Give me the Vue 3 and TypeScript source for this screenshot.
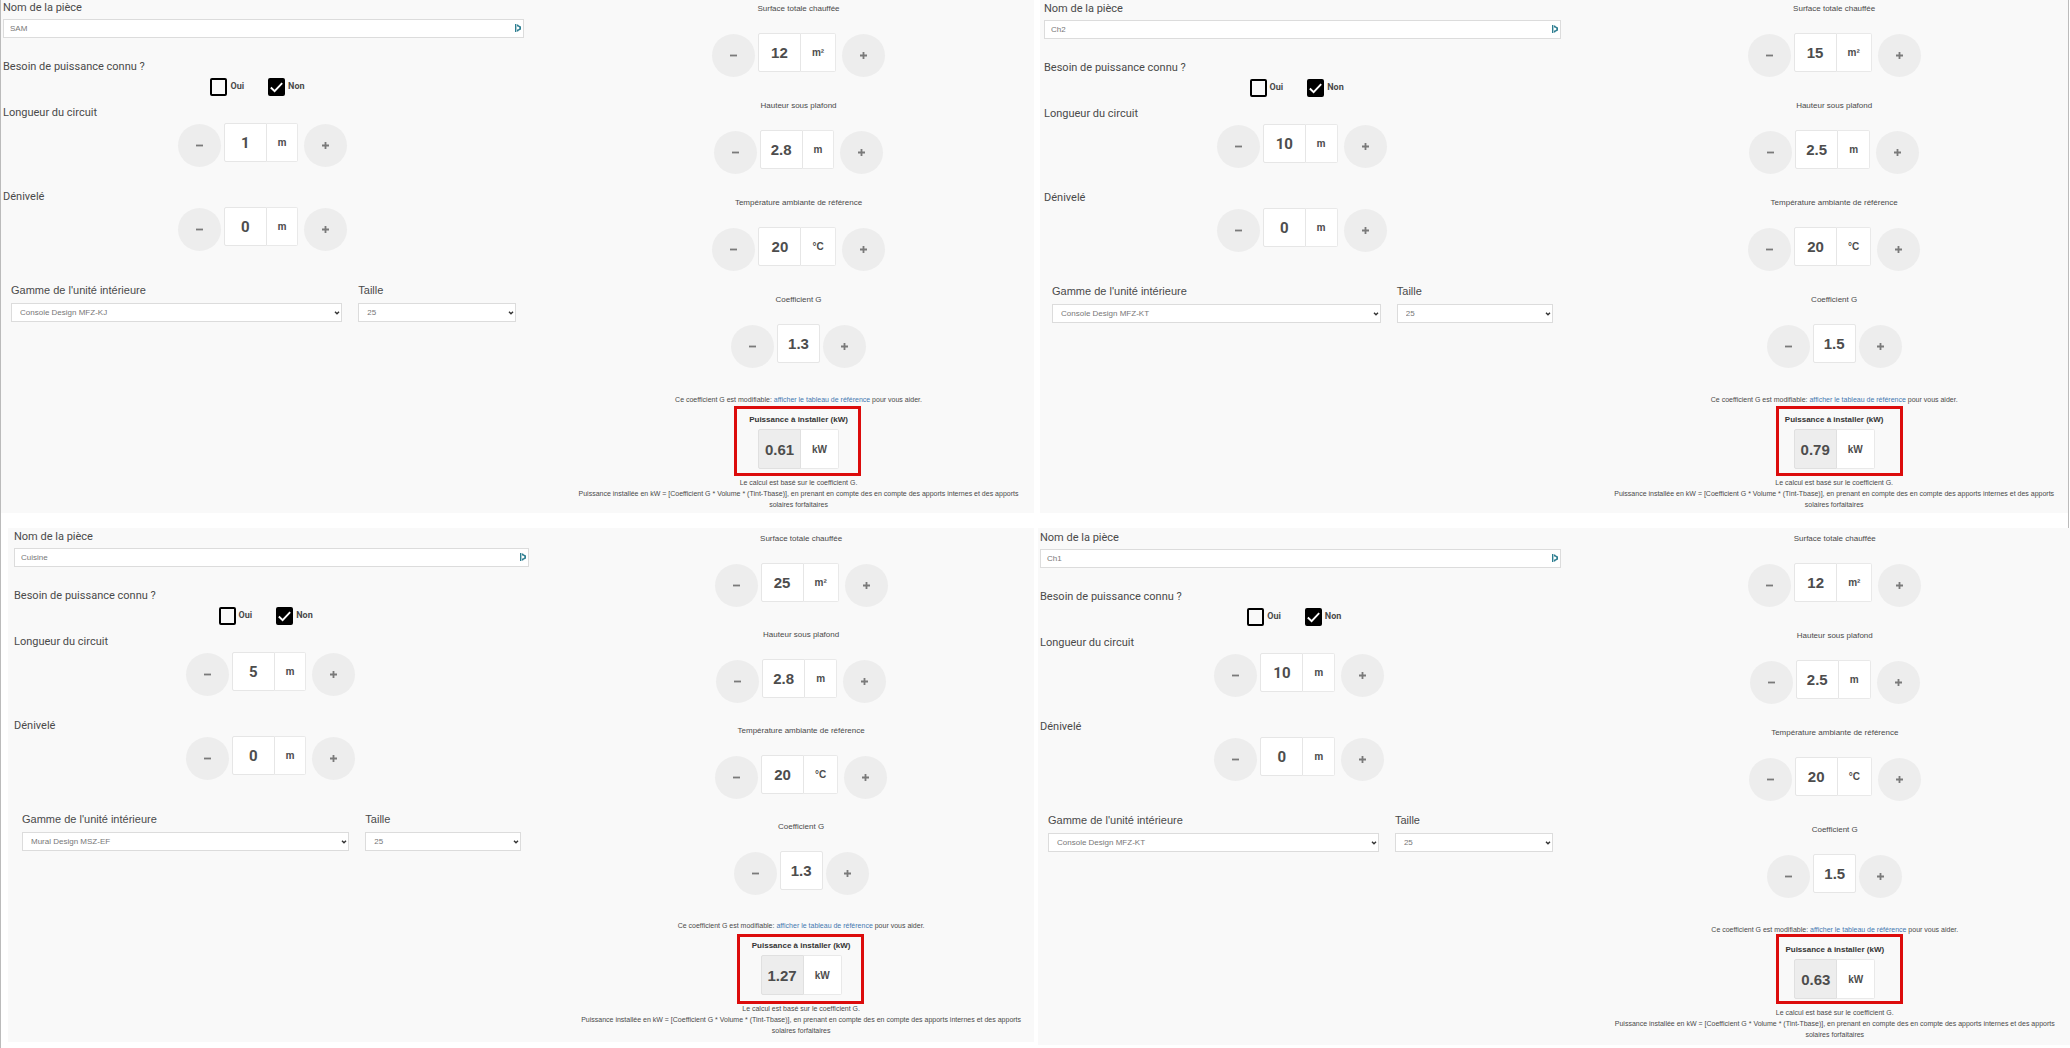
<script setup lang="ts">
import { reactive } from 'vue'

interface Stepper {
  id: string
  label: string
  value: string
  unit: string
  step: number
}

interface Room {
  id: string
  name: string
  known: boolean
  circuit: Stepper[]
  heating: Stepper[]
  range: string
  size: string
  power: string
  layout: Record<string, string>
}

const ranges = ['Console Design MFZ-KJ', 'Console Design MFZ-KT', 'Mural Design MSZ-EF']
const sizes = ['25', '35', '50']

function makeRoom(
  id: string,
  name: string,
  values: string[],
  range: string,
  power: string,
  layout: Record<string, string>,
): Room {
  const [length, surface, height, coefficient] = values
  return {
    id,
    name,
    known: false,
    circuit: [
      { id: 'length', label: 'Longueur du circuit', value: length, unit: 'm', step: 1 },
      { id: 'drop', label: 'Dénivelé', value: '0', unit: 'm', step: 1 },
    ],
    heating: [
      { id: 'surface', label: 'Surface totale chauffée', value: surface, unit: 'm²', step: 1 },
      { id: 'height', label: 'Hauteur sous plafond', value: height, unit: 'm', step: 0.1 },
      { id: 'temp', label: 'Température ambiante de référence', value: '20', unit: '°C', step: 1 },
      { id: 'coef', label: 'Coefficient G', value: coefficient, unit: '', step: 0.1 },
    ],
    range,
    size: '25',
    power,
    layout,
  }
}

function layout(basis: number, inset: number, form: number, calc: number, pitch: number, end: number, mark: number) {
  return {
    '--basis': `${basis}px`,
    '--inset': `${inset}px`,
    '--form-top': `${form}px`,
    '--calc-top': `${calc}px`,
    '--pitch': `${pitch}px`,
    '--end': `${end}px`,
    '--mark-right': `${mark}px`,
  }
}

const rows = reactive<Room[][]>([
  [
    makeRoom('sam', 'SAM', ['1', '12', '2.8', '1.3'], ranges[0], '0.61', layout(1033, 2, 1, 4, 97, 3, 173)),
    makeRoom('ch2', 'Ch2', ['10', '15', '2.5', '1.5'], ranges[1], '0.79', layout(1028, 4, 2, 4, 97, 3, 165)),
  ],
  [
    makeRoom('cuisine', 'Cuisine', ['5', '25', '2.8', '1.3'], ranges[2], '1.27', layout(1026, 6, 2, 6, 96, 6, 170)),
    makeRoom('ch1', 'Ch1', ['10', '12', '2.5', '1.5'], ranges[1], '0.63', layout(1032, 2, 3, 6, 97, 5, 167)),
  ],
])

function change(stepper: Stepper, direction: number) {
  const digits = stepper.step < 1 ? 1 : 0
  const next = Math.max(0, Number(stepper.value) + direction * stepper.step)
  stepper.value = next.toFixed(digits)
}
</script>

<template>
  <main class="page">
    <div v-for="(row, index) in rows" :key="index" class="row" :class="index === 0 ? 'row-first' : 'row-last'">
      <section v-for="room in row" :key="room.id" class="panel" :style="room.layout">
        <form class="form" @submit.prevent>
          <label class="heading" :for="room.id + '-name'">Nom de la pièce</label>
          <div class="name-box">
            <input :id="room.id + '-name'" v-model="room.name" class="field" type="text" />
            <svg class="name-icon" viewBox="0 0 6 8" aria-hidden="true">
              <path d="M0 0h1.4v8H0z" />
              <path d="M2 0.4h1.2v2H2zM2 5.6h1.2v2H2z" />
              <path d="M3 1L6 2.4v3.2L3 7V5.4l1.4-.8V3.4L3 2.6z" />
            </svg>
          </div>

          <p class="heading need">Besoin de puissance connu ?</p>
          <div class="checks">
            <label class="check">
              <span class="tick">
                <input type="checkbox" :checked="room.known" @change="room.known = true" />
                <svg v-if="room.known" viewBox="0 0 18 18" aria-hidden="true"><path d="M3 9.5l4 4L15 5" /></svg>
              </span>
              Oui
            </label>
            <label class="check">
              <span class="tick">
                <input type="checkbox" :checked="!room.known" @change="room.known = false" />
                <svg v-if="!room.known" viewBox="0 0 18 18" aria-hidden="true"><path d="M3 9.5l4 4L15 5" /></svg>
              </span>
              Non
            </label>
          </div>

          <div v-for="item in room.circuit" :key="item.id" class="circuit">
            <label class="heading" :for="room.id + '-' + item.id">{{ item.label }}</label>
            <div class="stepper">
              <button type="button" class="round" aria-label="Diminuer" @click="change(item, -1)">
                <svg viewBox="0 0 7 7" aria-hidden="true"><path d="M0 2.6h7v1.8H0z" /></svg>
              </button>
              <div class="value" :class="{ joined: item.unit }">
                <input :id="room.id + '-' + item.id" v-model="item.value" type="text" inputmode="decimal" />
                <span class="unit">{{ item.unit }}</span>
              </div>
              <button type="button" class="round" aria-label="Augmenter" @click="change(item, 1)">
                <svg viewBox="0 0 7 7" aria-hidden="true"><path d="M0 2.6h7v1.8H0zM2.6 0h1.8v7H2.6z" /></svg>
              </button>
            </div>
          </div>

          <div class="unit-choice">
            <div class="choice">
              <label class="sub-heading" :for="room.id + '-range'">Gamme de l'unité intérieure</label>
              <div class="select-box">
                <select :id="room.id + '-range'" v-model="room.range">
                  <option v-for="range in ranges" :key="range">{{ range }}</option>
                </select>
                <svg viewBox="0 0 6 4" aria-hidden="true"><path d="M1 .8l2 2 2-2" /></svg>
              </div>
            </div>
            <div class="choice">
              <label class="sub-heading" :for="room.id + '-size'">Taille</label>
              <div class="select-box">
                <select :id="room.id + '-size'" v-model="room.size">
                  <option v-for="size in sizes" :key="size">{{ size }}</option>
                </select>
                <svg viewBox="0 0 6 4" aria-hidden="true"><path d="M1 .8l2 2 2-2" /></svg>
              </div>
            </div>
          </div>
        </form>

        <div class="calc">
          <div v-for="item in room.heating" :key="item.id" class="heating">
            <label :for="room.id + '-' + item.id">{{ item.label }}</label>
            <div class="stepper">
              <button type="button" class="round" aria-label="Diminuer" @click="change(item, -1)">
                <svg viewBox="0 0 7 7" aria-hidden="true"><path d="M0 2.6h7v1.8H0z" /></svg>
              </button>
              <div class="value" :class="{ joined: item.unit }">
                <input :id="room.id + '-' + item.id" v-model="item.value" type="text" inputmode="decimal" />
                <span v-if="item.unit" class="unit">{{ item.unit }}</span>
              </div>
              <button type="button" class="round" aria-label="Augmenter" @click="change(item, 1)">
                <svg viewBox="0 0 7 7" aria-hidden="true"><path d="M0 2.6h7v1.8H0zM2.6 0h1.8v7H2.6z" /></svg>
              </button>
            </div>
          </div>

          <p class="hint">
            Ce coefficient G est modifiable: <a href="#reference">afficher le tableau de référence</a> pour vous aider.
          </p>
          <label class="power-label" :for="room.id + '-power'">Puissance à installer (kW)</label>
          <div class="value joined power">
            <input :id="room.id + '-power'" :value="room.power" type="text" readonly />
            <span class="unit">kW</span>
          </div>
          <p class="note">
            Le calcul est basé sur le coefficient G.<br />
            Puissance installée en kW = [Coefficient G * Volume * (Tint-Tbase)], en prenant en compte des en compte des
            apports internes et des apports solaires forfaitaires
          </p>
        </div>
        <div class="mark" aria-hidden="true"></div>
      </section>
    </div>
  </main>
</template>

<style>
body {
  background: #fff;
}
</style>

<style scoped>
.page {
  box-sizing: border-box;
  min-height: 100vh;
  border-left: 1px solid #bbb;
  color: #4a4a4a;
  font-family: 'Liberation Sans', Arial, sans-serif;
  font-size: 8px;
}

.row {
  display: flex;
}

.row-first {
  gap: 6px;
  margin-right: 1px;
  padding-bottom: 15px;
  border-right: 1px solid #bbb;
}

.row-last {
  align-items: flex-start;
  gap: 4px;
  padding-left: 7px;
}

.panel {
  position: relative;
  box-sizing: border-box;
  display: grid;
  grid-template-columns: minmax(0, 10fr) minmax(0, 9fr);
  column-gap: 41px;
  flex: 1 1 var(--basis);
  min-width: 0;
  padding: 0 0 var(--end) var(--inset);
  background: #f9f9f9;
}

.form {
  padding-top: var(--form-top);
}

p {
  margin: 0;
}

.heading,
.sub-heading {
  display: block;
  font-size: 11px;
  line-height: 14px;
}

.heading {
  font-family: Roboto, 'Liberation Sans', sans-serif;
}

.name-box,
.select-box {
  position: relative;
}

.name-box {
  margin-top: 4px;
}

.field,
select {
  display: block;
  box-sizing: border-box;
  width: 100%;
  height: 19px;
  border: 1px solid #dcdcdc;
  border-radius: 0;
  background: #fff;
  color: #777;
  font: 8px 'Liberation Sans', Arial, sans-serif;
}

.field {
  padding: 0 6px;
}

select {
  appearance: none;
  padding: 0 8px;
}

.name-icon {
  position: absolute;
  top: 5px;
  right: 3px;
  width: 6px;
  height: 8px;
  fill: #2c7d90;
}

.need {
  margin-top: 22px;
}

.checks {
  display: flex;
  justify-content: center;
  gap: 24px;
  margin: 4px 12px 10px 0;
}

.check {
  display: flex;
  align-items: flex-start;
  gap: 3px;
  height: 18px;
  font: bold 9px/16px Roboto, 'Liberation Sans', sans-serif;
}

.tick {
  position: relative;
  width: 17px;
  height: 18px;
}

.tick input {
  appearance: none;
  display: block;
  box-sizing: border-box;
  width: 100%;
  height: 100%;
  margin: 0;
  border: 2px solid #000;
  border-radius: 2px;
}

.tick input:checked {
  background: #000;
}

.tick svg {
  position: absolute;
  inset: 0;
  width: 100%;
  height: 100%;
  fill: none;
  stroke: #fff;
  stroke-width: 2;
  pointer-events: none;
}

.circuit .stepper {
  margin: 3px 2px 23px 0;
}

.stepper {
  display: flex;
  justify-content: center;
  gap: 3px;
}

.round {
  display: flex;
  align-items: center;
  justify-content: center;
  width: 43px;
  height: 43px;
  margin-top: 1px;
  padding: 0;
  border: 0;
  border-radius: 50%;
  background: #ededed;
}

.round svg {
  width: 7px;
  height: 7px;
  fill: #7a7a7a;
}

.value {
  display: flex;
  height: 39px;
  color: #4d4d4d;
  font-weight: bold;
}

.value input {
  box-sizing: border-box;
  width: 43px;
  height: 100%;
  padding: 0;
  border: 1px solid #e6e6e6;
  border-radius: 2px;
  background: #fff;
  color: inherit;
  font: bold 15px 'Liberation Sans', Arial, sans-serif;
  text-align: center;
}

.joined input {
  border-radius: 2px 0 0 2px;
}

.stepper .joined {
  margin-right: 3px;
}

.unit {
  display: flex;
  align-items: center;
  padding: 0 11px;
  border: 1px solid #e9e9e9;
  border-left: 0;
  border-radius: 0 2px 2px 0;
  background: #fff;
  font-size: 10px;
}

.circuit .value input,
.circuit .unit {
  font-family: Roboto, 'Liberation Sans', sans-serif;
}

.unit-choice {
  display: grid;
  grid-template-columns: minmax(0, 21fr) minmax(0, 10fr);
  gap: 16px;
  margin: 32px 8px 0;
}

.select-box {
  margin-top: 6px;
}

.select-box svg {
  position: absolute;
  top: 8px;
  right: 2px;
  width: 6px;
  height: 4px;
  fill: none;
  stroke: #333;
  stroke-width: 1.4;
  pointer-events: none;
}

.calc {
  display: flex;
  flex-direction: column;
  align-items: center;
  padding: var(--calc-top) 4px 0 2px;
  text-align: center;
}

.heating {
  height: var(--pitch);
}

.heating label {
  display: block;
  line-height: 10px;
}

.heating .stepper {
  margin-top: 19px;
}

.hint {
  margin: 3px 0 10px;
  font-size: 7px;
  line-height: 10px;
}

.hint a {
  color: #4478b0;
  text-decoration: none;
}

.power-label {
  margin-bottom: 4px;
  color: #333;
  font-weight: bold;
  line-height: 10px;
}

.power {
  height: 40px;
}

.power input {
  border-color: #e0e0e0;
  background: #ededed;
}

.note {
  margin-top: 8px;
  padding: 0 4px;
  font-size: 7px;
  line-height: 11px;
}

.mark {
  position: absolute;
  top: 406px;
  right: var(--mark-right);
  box-sizing: border-box;
  width: 127px;
  height: 70px;
  border: 3px solid #dc0c0c;
  pointer-events: none;
}
</style>
